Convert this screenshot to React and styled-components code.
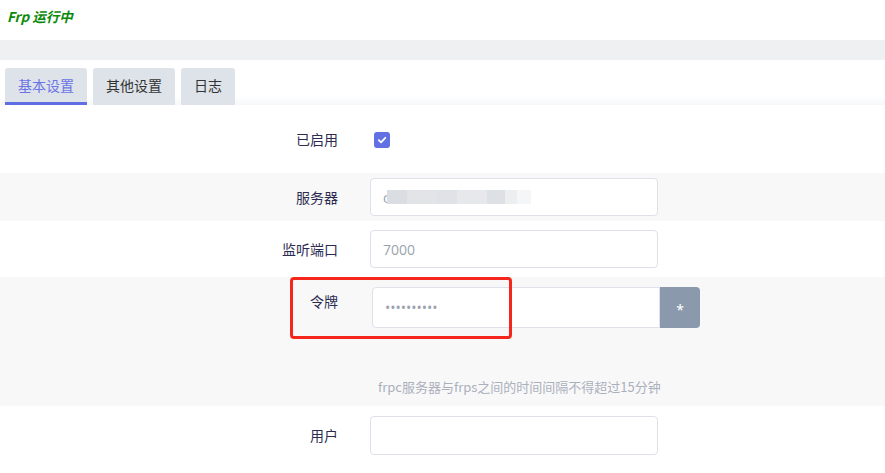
import React from "react";
import styled, { createGlobalStyle } from "styled-components";

const Global = createGlobalStyle`
  html, body { margin: 0; padding: 0; background: #fff; }
  body { font-family: "Noto Sans", "Noto Sans CJK SC", sans-serif; }
  * { box-sizing: border-box; }
`;

const Page = styled.div`
  width: 885px;
  height: 473px;
  overflow: hidden;
  position: relative;
  background: #fff;
`;

const Status = styled.div`
  height: 40px;
  padding: 6px 0 0 7px;
  font-size: 13.5px;
  font-weight: bold;
  font-style: italic;
  color: #0a8a0a;
  font-family: "Noto Sans CJK SC", sans-serif;
  line-height: 20px;
`;

const Band = styled.div`
  height: 20px;
  background: #eef0f2;
`;

const TabBar = styled.div`
  display: flex;
  gap: 6px;
  padding: 8px 0 0 5px;
  height: 45px;
  background: linear-gradient(to bottom, #fff 0, #fff 80%, #f6f7f9 100%);
`;

const Tab = styled.div`
  height: 37px;
  padding: 0 13px;
  display: flex;
  align-items: center;
  border-radius: 3px 3px 0 0;
  background: #dde3e9;
  font-family: "Noto Sans CJK SC", sans-serif;
  font-size: 14px;
  color: ${(p) => (p.$active ? "#6b73e6" : "#333")};
  border-bottom: 3px solid ${(p) => (p.$active ? "#5f6ee2" : "transparent")};
`;

const Row = styled.div`
  display: grid;
  grid-template-columns: 338px 1fr;
  column-gap: 32px;
  align-items: ${(p) => (p.$top ? "start" : "center")};
  background: ${(p) => (p.$gray ? "#f8f8f8" : "#fff")};
  height: ${(p) => p.$h}px;
  padding-top: ${(p) => p.$pt || 0}px;
  padding-bottom: ${(p) => p.$pb || 0}px;
`;

const Label = styled.div`
  text-align: right;
  font-family: "Noto Sans CJK SC", sans-serif;
  font-size: 14px;
  color: #2c2c52;
  line-height: ${(p) => (p.$lh ? p.$lh + "px" : "20px")};
`;

const Control = styled.div`
  display: flex;
  flex-direction: column;
  align-items: flex-start;
`;

const Check = styled.span`
  display: inline-flex;
  align-items: center;
  justify-content: center;
  width: 16px;
  height: 16px;
  border-radius: 3px;
  background: #6170e3;
  margin: 2px 0 0 4px;
`;

const Input = styled.input`
  width: 288px;
  height: ${(p) => p.$h || 38}px;
  border: 1px solid #dfe1ea;
  border-radius: ${(p) => (p.$joined ? "4px 0 0 4px" : "4px")};
  padding: 0 12px;
  font-family: "Open Sans", "Noto Sans", sans-serif;
  font-size: 14px;
  color: #9aa3ae;
  background: #fff;
  outline: none;
`;

const FakeInput = styled.div`
  width: 288px;
  height: 38px;
  border: 1px solid #dfe1ea;
  border-radius: 4px;
  padding: 0 12px;
  display: flex;
  align-items: center;
  background: #fff;
  font-family: "Open Sans", sans-serif;
  font-size: 14px;
  color: #9aa3ae;
`;

const Mosaic = styled.span`
  display: inline-block;
  height: 14px;
  width: 144px;
  margin-left: -3px;
  background: linear-gradient(
    to right,
    #dadde2 0, #dadde2 20px,
    #e2e4e8 20px, #e2e4e8 50px,
    #dfe2e6 50px, #dfe2e6 70px,
    #e6e8eb 70px, #e6e8eb 100px,
    #dde0e4 100px, #dde0e4 118px,
    #eceef0 118px, #eceef0 130px,
    #f5f6f7 130px, #f5f6f7 144px
  );
`;

const Group = styled.div`
  display: flex;
  margin-left: 2px;
`;

const Addon = styled.button`
  width: 40px;
  height: 41px;
  border: none;
  border-radius: 0 4px 4px 0;
  background: #8a99ab;
  color: #fff;
  font-size: 14px;
  font-family: "Noto Sans", sans-serif;
  padding: 4px 0 0;
`;

const Help = styled.div`
  margin-top: 50px;
  margin-left: 8px;
  font-family: "Noto Sans CJK SC", sans-serif;
  font-size: 13px;
  line-height: 18px;
  color: #abb0bd;
`;

const Highlight = styled.div`
  position: absolute;
  left: 290px;
  top: 277px;
  width: 222px;
  height: 62px;
  border: 3px solid #f5261c;
  border-radius: 4px;
  pointer-events: none;
`;

export default function App() {
  return (
    <Page>
      <Global />
      <Status>Frp 运行中</Status>
      <Band />
      <TabBar>
        <Tab $active>基本设置</Tab>
        <Tab>其他设置</Tab>
        <Tab>日志</Tab>
      </TabBar>

      <Row $h={68}>
        <Label>已启用</Label>
        <Control>
          <Check>
            <svg width="10" height="10" viewBox="0 0 10 10">
              <path d="M1.8 5.2 L4 7.3 L8.3 2.8" fill="none" stroke="#fff" strokeWidth="1.8" strokeLinecap="round" strokeLinejoin="round" />
            </svg>
          </Check>
        </Control>
      </Row>

      <Row $gray $h={48} $pt={1} $pb={1}>
        <Label>服务器</Label>
        <Control>
          <FakeInput>
            c<Mosaic />
          </FakeInput>
        </Control>
      </Row>

      <Row $h={56}>
        <Label>监听端口</Label>
        <Control>
          <Input defaultValue="7000" />
        </Control>
      </Row>

      <Row $gray $top $h={129} $pt={10}>
        <Label $lh={28}>令牌</Label>
        <Control>
          <Group>
            <Input type="password" defaultValue="1234567890" $h={41} $joined />
            <Addon>*</Addon>
          </Group>
          <Help>frpc服务器与frps之间的时间间隔不得超过15分钟</Help>
        </Control>
      </Row>

      <Row $top $h={67} $pt={10}>
        <Label $lh={39}>用户</Label>
        <Control>
          <Input $h={39} />
        </Control>
      </Row>

      <Highlight />
    </Page>
  );
}
